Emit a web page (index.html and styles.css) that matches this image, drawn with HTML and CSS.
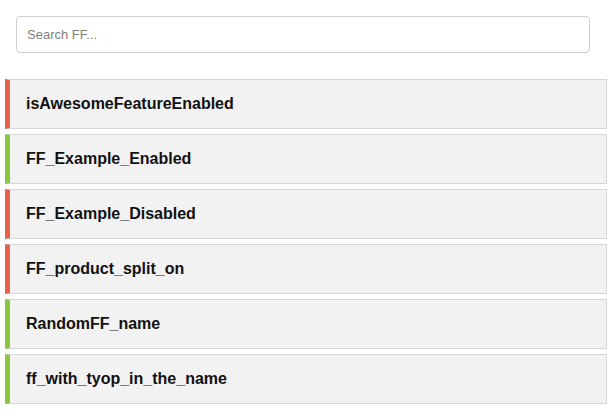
FILE: index.html
```html
<!doctype html>
<html lang="en">
<head>
    <meta charset="UTF-8">
    <title>Feature flags</title>
    <link rel="stylesheet" href="styles.css">
</head>
<body>
    <div class="search">
        <input class="search__input" type="text" placeholder="Search FF...">
    </div>
    <div class="flags">
        <div class="flag flag--off">isAwesomeFeatureEnabled</div>
        <div class="flag flag--on">FF_Example_Enabled</div>
        <div class="flag flag--off">FF_Example_Disabled</div>
        <div class="flag flag--off">FF_product_split_on</div>
        <div class="flag flag--on">RandomFF_name</div>
        <div class="flag flag--on">ff_with_tyop_in_the_name</div>
    </div>
</body>
</html>
```

FILE: styles.css
```css
*,*:before,*:after{
    box-sizing: border-box;
}
body{
    margin: 0;
    padding: 0;
    background: #fff;
    font-family: 'Liberation Sans', Arial, sans-serif;
}
.search{
    padding: 16px 21px 26px 16px;
}
.search__input{
    display: block;
    width: 100%;
    height: 37px;
    border: 1px solid #cfcfcf;
    border-radius: 4px;
    padding: 0 10px;
    font-family: 'Liberation Sans', Arial, sans-serif;
    font-size: 13px;
    color: #333;
    outline: none;
}
.search__input::placeholder{
    color: #808080;
}
.flags{
    display: flex;
    flex-direction: column;
    gap: 5px;
    padding: 0 4px 0 5px;
}
.flag{
    height: 50px;
    display: flex;
    align-items: center;
    padding-left: 16px;
    background: #f2f2f2;
    border: 1px solid #d6d6d6;
    border-left: 5px solid #e8624a;
    font-size: 16px;
    font-weight: bold;
    color: #111;
}
.flag--on{
    border-left-color: #8cc63e;
}
```
